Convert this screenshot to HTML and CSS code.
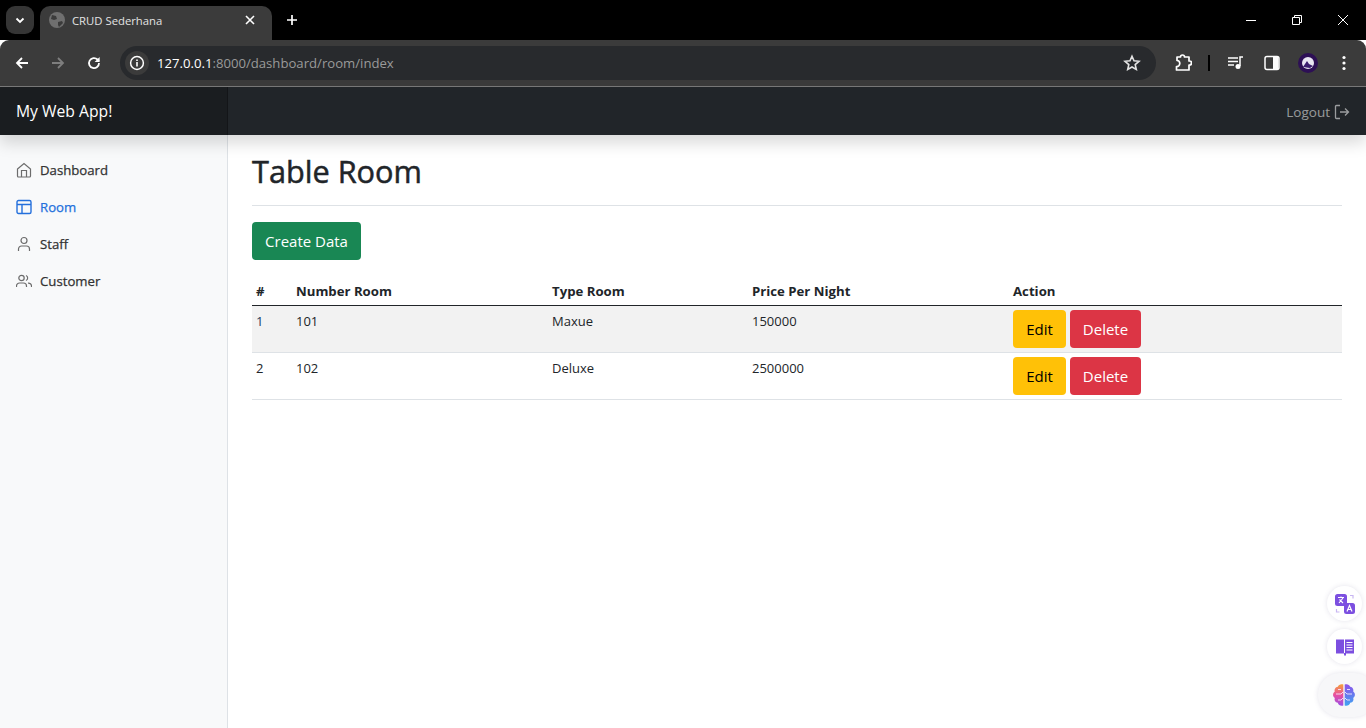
FILE: index.html
```html
<!DOCTYPE html>
<html lang="en">
<head>
<meta charset="utf-8">
<title>CRUD Sederhana</title>
<link rel="stylesheet" href="styles.css">
</head>
<body>
<div class="chrome">
  <div class="tabstrip">
    <button class="tab-search"><svg width="12" height="12" viewBox="0 0 12 12"><path d="M2.500 4.500 6 8l3.500-3.500" fill="none" stroke="#fff" stroke-width="1.800"/></svg></button>
    <div class="tab">
      <svg class="favicon" width="16" height="16" viewBox="0 0 16 16"><circle cx="8" cy="8" r="8" fill="#6f6f6f"/><path d="M3 3l4 1 1 3-3 1-3-1zM9 10l4-1 1 2-4 4-1-2z" fill="#3b3b3b"/></svg>
      <span class="tab-title">CRUD Sederhana</span>
      <svg class="tab-close" width="10" height="10" viewBox="0 0 10 10"><path d="M1 1l8 8M9 1 1 9" stroke="#fff" stroke-width="1.600"/></svg>
    </div>
    <svg class="new-tab" width="12" height="12" viewBox="0 0 12 12"><path d="M6 1v10M1 6h10" stroke="#fff" stroke-width="1.700"/></svg>
    <div class="win-controls">
      <svg width="12" height="12" viewBox="0 0 12 12"><path d="M1 6.500h10" stroke="#fff"/></svg>
      <svg width="12" height="12" viewBox="0 0 12 12"><path d="M1.500 3.500h7v7h-7zM3.500 3.500v-2h7v7h-2" fill="none" stroke="#fff"/></svg>
      <svg width="12" height="12" viewBox="0 0 12 12"><path d="M1 1l10 10M11 1 1 11" stroke="#fff"/></svg>
    </div>
  </div>
  <div class="toolbar">
    <svg class="tool" width="16" height="16" viewBox="0 0 16 16"><path d="M14 8H3M8 3 3 8l5 5" fill="none" stroke="#fff" stroke-width="1.800"/></svg>
    <svg class="tool" width="16" height="16" viewBox="0 0 16 16"><path d="M2 8h11M8 3l5 5-5 5" fill="none" stroke="#7e7e7e" stroke-width="1.800"/></svg>
    <svg class="tool" width="16" height="16" viewBox="0 0 16 16"><path d="M13 8a5 5 0 1 1-1.500-3.500L13 6" fill="none" stroke="#fff" stroke-width="1.800"/><path d="M13.600 2v5h-5z" fill="#fff"/></svg>
    <div class="omnibox">
      <span class="info"><svg width="16" height="16" viewBox="0 0 16 16"><circle cx="8" cy="8" r="6.400" fill="none" stroke="#fff" stroke-width="1.500"/><path d="M8 7v4.400M8 4.400v1.600" stroke="#fff" stroke-width="1.600"/></svg></span>
      <span class="url"><span class="host">127.0.0.1</span>:8000/dashboard/room/index</span>
      <svg class="star" width="18" height="18" viewBox="0 0 18 18"><path d="M9 2.200l2 4.600 5 .5-3.800 3.300 1.100 4.900L9 13l-4.300 2.500 1.100-4.900L2 7.300l5-.5z" fill="none" stroke="#e3e3e3" stroke-width="1.600"/></svg>
    </div>
    <div class="tool-right">
      <svg width="18" height="18" viewBox="0 0 18 18"><path d="M3 3h3.500a2 2 0 0 1 4 0H15v4h.5a2 2 0 0 1 0 4H15v5H2.500v-3.500a2 2 0 0 0 .5-6z" fill="none" stroke="#fff" stroke-width="1.700" stroke-linejoin="round"/></svg>
      <span class="divider"></span>
      <svg width="16" height="14" viewBox="0 0 16 14"><path d="M0 2h10M0 5.500h10M0 9h6" stroke="#fff" stroke-width="1.500"/><path d="M12 10V1h3" fill="none" stroke="#fff" stroke-width="1.500"/><circle cx="10" cy="10.500" r="2.500" fill="#fff"/></svg>
      <svg class="panel-icon" width="16" height="16" viewBox="0 0 16 16"><rect x="1" y="1.500" width="14" height="13" rx="2" fill="none" stroke="#fff" stroke-width="1.500"/><rect x="9" y="2" width="5.500" height="12" fill="#fff"/></svg>
      <svg width="20" height="20" viewBox="0 0 20 20"><circle cx="10" cy="10" r="10" fill="#2d0f55"/><circle cx="10" cy="10" r="6" fill="#e9e6f2"/><path d="M5 14l4-6 2 3 4 2-3 2z" fill="#3b1d6e"/></svg>
      <svg class="dots" width="4" height="16" viewBox="0 0 4 16"><circle cx="2" cy="2.500" r="1.600" fill="#fff"/><circle cx="2" cy="8" r="1.600" fill="#fff"/><circle cx="2" cy="13.500" r="1.600" fill="#fff"/></svg>
    </div>
  </div>
</div>
<header class="navbar">
  <a class="brand">My Web App!</a>
  <a class="logout">Logout
    <svg width="16" height="16" viewBox="0 0 16 16"><path d="M6 1.500H2.500a1 1 0 0 0-1 1v11a1 1 0 0 0 1 1H6M6 8h8.500M11 4.500 14.500 8 11 11.500" fill="none" stroke="currentColor" stroke-width="1.300"/></svg>
  </a>
</header>
<div class="app">
  <nav class="sidebar">
    <a class="nav-link"><svg width="16" height="16" viewBox="0 0 16 16"><path d="M1.500 7 8 1.500 14.500 7v7a1 1 0 0 1-1 1h-11a1 1 0 0 1-1-1zM5.500 15V8.500h5V15" fill="none" stroke="#6c6c6c" stroke-width="1.200"/></svg>Dashboard</a>
    <a class="nav-link active"><svg width="16" height="16" viewBox="0 0 16 16"><rect x="1" y="1.500" width="14" height="13" rx="1.500" fill="none" stroke="#2470dc" stroke-width="1.400"/><path d="M1 5.500h14M6 5.500v9" stroke="#2470dc" stroke-width="1.400"/></svg>Room</a>
    <a class="nav-link"><svg width="16" height="16" viewBox="0 0 16 16"><circle cx="8" cy="4.500" r="3" fill="none" stroke="#6c6c6c" stroke-width="1.200"/><path d="M2.500 15v-2a3 3 0 0 1 3-3h5a3 3 0 0 1 3 3v2" fill="none" stroke="#6c6c6c" stroke-width="1.200"/></svg>Staff</a>
    <a class="nav-link"><svg width="16" height="16" viewBox="0 0 16 16"><circle cx="5.500" cy="5" r="2.700" fill="none" stroke="#6c6c6c" stroke-width="1.200"/><path d="M.5 14v-1a3 3 0 0 1 3-3h4a3 3 0 0 1 3 3v1M10 2.500a2.700 2.700 0 0 1 0 5M12 10.200a3 3 0 0 1 3.500 2.800v1" fill="none" stroke="#6c6c6c" stroke-width="1.200"/></svg>Customer</a>
  </nav>
  <main class="content">
    <h1 class="title">Table Room</h1>
    <hr class="rule">
    <a class="btn btn-success">Create Data</a>
    <table class="table">
      <colgroup><col class="c1"><col class="c2"><col class="c3"><col class="c4"><col class="c5"></colgroup>
      <thead><tr><th>#</th><th>Number Room</th><th>Type Room</th><th>Price Per Night</th><th>Action</th></tr></thead>
      <tbody>
        <tr class="shaded"><td class="num">1</td><td>101</td><td>Maxue</td><td>150000</td><td class="actions"><a class="btn btn-warning">Edit</a><a class="btn btn-danger">Delete</a></td></tr>
        <tr><td>2</td><td>102</td><td>Deluxe</td><td>2500000</td><td class="actions"><a class="btn btn-warning">Edit</a><a class="btn btn-danger">Delete</a></td></tr>
      </tbody>
    </table>
  </main>
</div>
<div class="float float-a"><svg width="20" height="20" viewBox="0 0 20 20"><rect x="0" y="0" width="12" height="12" rx="2.500" fill="#7c4fe0"/><path d="M3 3.500h6M6 2.500v1M4 9l4-5M4.500 5.500 8 9" stroke="#fff" stroke-width="1.100" fill="none"/><rect x="9" y="9" width="11" height="11" rx="2.500" fill="#7c4fe0"/><path d="M12 17.500l2.500-6 2.500 6M13 15.500h3" stroke="#fff" stroke-width="1.200" fill="none"/><path d="M15 1.500h3v3M1.500 15v3h3" stroke="#c8b6f2" stroke-width="1.200" fill="none"/></svg></div>
<div class="float float-b"><svg width="18" height="18" viewBox="0 0 18 18"><path d="M0 1.500h8v14H0z" fill="#7c4fe0"/><rect x="9" y="1.500" width="9" height="14" fill="#7c4fe0"/><path d="M10.500 4.500h6M10.500 7h6M10.500 9.500h6M10.500 12h6" stroke="#fff" stroke-width="1.100"/><path d="M8 15h2v2.500H8z" fill="#7c4fe0"/></svg></div>
<div class="float-c"><svg width="24" height="24" viewBox="0 0 24 24"><defs><linearGradient id="brainL" x1="0" y1="0" x2="0" y2="1"><stop offset="0" stop-color="#f5a13a"/><stop offset=".5" stop-color="#e94fa0"/><stop offset="1" stop-color="#9a4fe8"/></linearGradient><linearGradient id="brainR" x1="0" y1="0" x2="0" y2="1"><stop offset="0" stop-color="#8d52ea"/><stop offset="1" stop-color="#3fa4f2"/></linearGradient></defs><path d="M11.300 1.500v21c-2.500.8-5-.5-5.500-2.700C3 19.500 2 17 2.800 15 .5 13.500.5 10 2.800 8.500 2 6.500 3.500 4 5.800 3.800 6.500 1.500 9 .8 11.300 1.500z" fill="url(#brainL)"/><path d="M12.700 1.500v21c2.500.8 5-.5 5.500-2.700 2.800-.3 3.800-2.800 3-4.800 2.300-1.500 2.300-5 0-6.500.8-2-.7-4.500-3-4.700C17.500 1.500 15 .8 12.700 1.500z" fill="url(#brainR)"/><path d="M4 11h5l2-2M6 6.500h3M6 17h3l2-2M20 11h-5l-2-2M18 6.500h-3M18 17h-3l-2-2" fill="none" stroke="#f4e9fb" stroke-width=".9"/></svg></div>
</body>
</html>
```
FILE: styles.css
```css
* { box-sizing: border-box; }
html, body { margin: 0; height: 100%; overflow: hidden; }
body {
  font-family: "Open Sans", "Liberation Sans", sans-serif;
  font-size: 15px;
  color: #212529;
  background: #fff;
  display: flex;
  flex-direction: column;
  height: 728px;
  position: relative;
}
a { text-decoration: none; color: inherit; }

/* browser frame */
.chrome { flex: none; }
.tabstrip {
  height: 40px;
  background: #000;
  display: flex;
  align-items: flex-start;
  padding: 6px 0 0 6px;
}
.tab-search {
  width: 28px; height: 28px;
  border: 0; padding: 0;
  border-radius: 9px;
  background: #353535;
  display: flex; align-items: center; justify-content: center;
}
.tab {
  width: 232px; height: 34px;
  margin-left: 6px;
  background: #3b3b3b;
  border-radius: 10px 10px 0 0;
  display: flex; align-items: center;
  padding: 0 17px 6px 9px;
  color: #e3e3e3;
}
.tab-title {
  margin-left: 7px;
  flex: 1;
  font-size: 11.300px;
}
.new-tab { margin: 8px 0 0 14px; }
.win-controls {
  margin-left: auto;
  display: flex;
  gap: 34px;
  padding: 8px 17px 0 0;
}
.toolbar {
  height: 47px;
  background: #3b3b3b;
  border-bottom: 1px solid #7a7a7a;
  border-radius: 9px 9px 0 0;
  display: flex; align-items: center;
  padding: 0 14px 0 14px;
  gap: 20px;
}
.tool { flex: none; }
.omnibox {
  flex: none;
  width: 1036px; height: 34px;
  margin-left: -2px;
  background: #282a2d;
  border-radius: 17px;
  display: flex; align-items: center;
  padding: 0 15px 0 5px;
  color: #9a9a9a;
}
.info {
  width: 24px; height: 24px;
  border-radius: 50%;
  background: #3b3b3b;
  display: flex; align-items: center; justify-content: center;
}
.url { margin-left: 8px; font-size: 13.150px; flex: 1; }
.host { color: #fff; }
.tool-right {
  display: flex; align-items: center;
  margin-left: -2px;
  gap: 18px;
}
.divider { width: 2px; height: 16px; background: #000; margin-left: -2px; }
.panel-icon { margin-left: 2px; }
.dots { margin-left: 6px; }

/* app bar */
.navbar {
  flex: none;
  height: 48px;
  background: #212529;
  display: flex; align-items: center; justify-content: space-between;
  position: relative;
  z-index: 2;
  box-shadow: 0 8px 16px rgba(0,0,0,.15);
}
.brand {
  width: 228px; height: 100%;
  display: flex; align-items: center;
  padding-left: 16px;
  font-size: 15.700px;
  color: #fff;
  background: #1a1d20;
  box-shadow: inset -1px 0 0 rgba(0,0,0,.25);
}
.logout {
  display: flex; align-items: center; gap: 4px;
  padding: 1px 16px 0 0;
  font-size: 13.500px;
  color: rgba(255,255,255,.55);
}

/* layout */
.app { flex: 1; display: flex; min-height: 0; }
.sidebar {
  flex: none;
  width: 228px;
  background: #f8f9fa;
  border-right: 1px solid #dee2e6;
  padding-top: 16px;
  display: flex; flex-direction: column;
}
.nav-link {
  height: 37px;
  display: flex; align-items: center;
  gap: 8px;
  padding-left: 16px;
  font-size: 13.200px;
  font-weight: 500;
  -webkit-text-stroke: .25px currentColor;
  color: #333;
}
.nav-link.active { color: #2470dc; }
.content { flex: 1; padding: 16px 24px 0; min-width: 0; }
.title {
  margin: 0;
  font-size: 30.700px;
  font-weight: 500;
  -webkit-text-stroke: .5px currentColor;
  line-height: 41px;
  color: #212529;
}
.rule { border: 0; border-top: 1px solid #dee2e6; margin: 13px 0 16px; }

/* buttons */
.btn {
  display: inline-flex; align-items: center; justify-content: center;
  height: 38px;
  border-radius: 4px;
  font-size: 15px;
}
.btn-success { background: #198754; color: #fff; width: 109px; }
.btn-warning { background: #ffc107; color: #000; width: 53px; }
.btn-danger { background: #dc3545; color: #fff; width: 71px; margin-left: 4px; }

/* table */
.table {
  width: 1090px;
  table-layout: fixed;
  border-collapse: collapse;
  margin-top: 16px;
  font-size: 13px;
}
.c1 { width: 40px; } .c2 { width: 256px; } .c3 { width: 200px; } .c4 { width: 261px; } .c5 { width: 333px; }
th, td { padding: 5px 4px 3px; text-align: left; vertical-align: top; line-height: 21px; color: #212529; }
th { font-size: 13.200px; font-weight: 700; height: 29px; border-bottom: 1px solid #212529; }
td { border-bottom: 1px solid #dee2e6; height: 47px; }
td.actions { padding: 4px; }
.shaded td { background: #f2f2f2; }
td.num { color: #23415f; }

/* floating assistant buttons */
.float, .float-c {
  position: absolute;
  display: flex; align-items: center; justify-content: center;
  box-shadow: 0 0 5px rgba(90,80,130,.16);
  z-index: 3;
}
.float { right: 4px; width: 35px; height: 35px; border-radius: 50%; background: #fff; }
.float-a { top: 586px; }
.float-b { top: 629px; }
.float-c {
  top: 673px; right: -10px;
  width: 58px; height: 44px;
  border-radius: 22px;
  padding-right: 6px;
  background: #f7f7f9;
}
```
